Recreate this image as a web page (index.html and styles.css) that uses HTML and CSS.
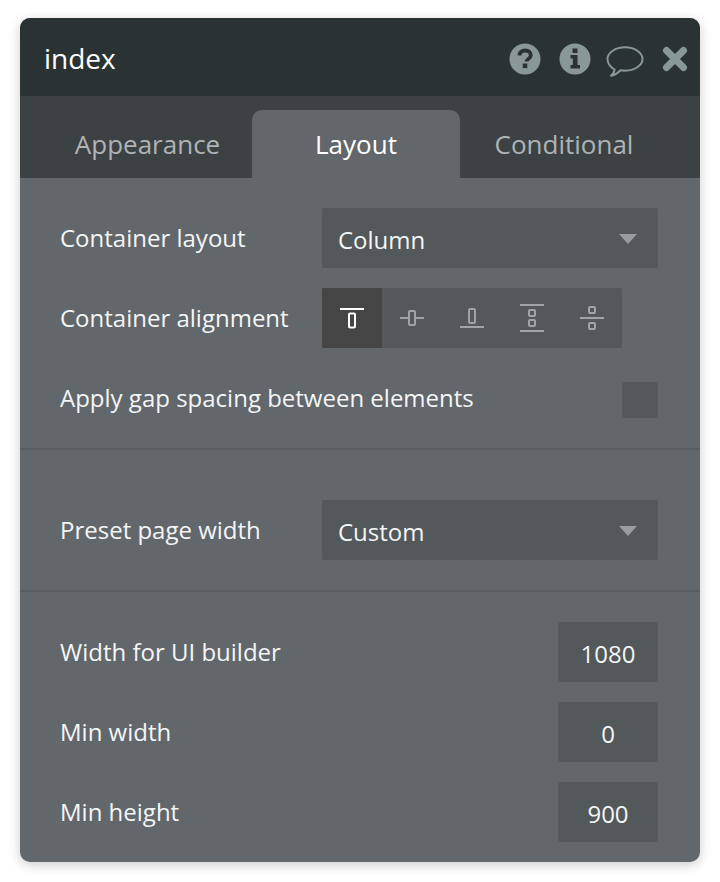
FILE: index.html
```html
<!DOCTYPE html>
<html lang="en">
<head>
    <meta charset="UTF-8">
    <title>index</title>
    <link rel="stylesheet" href="styles.css">
</head>
<body>
<div class="panel">
    <div class="head">
        <span class="title">index</span>
        <div class="head-icons">
            <svg class="ico" width="32" height="32" viewBox="0 0 32 32">
                <circle cx="16" cy="16" r="15.5" fill="#8a9799"/>
                <path d="M10.5 12.5c0-3.2 2.500-5 5.700-5 3.200 0 5.600 1.900 5.600 4.700 0 3.800-4.300 3.600-4.300 6.300" fill="none" stroke="#2b3234" stroke-width="3.800"/>
                <rect x="13.700" y="20.500" width="4.600" height="4.600" fill="#2b3234"/>
            </svg>
            <svg class="ico" width="32" height="32" viewBox="0 0 32 32">
                <circle cx="16" cy="16" r="15.500" fill="#8a9799"/>
                <rect x="13.500" y="5.500" width="5" height="4.500" fill="#2b3234"/>
                <path d="M11.500 12h7v10h2.500v3.500H11.500V22h2.300v-6.500h-2.300z" fill="#2b3234"/>
            </svg>
            <svg class="ico chat" width="38" height="36" viewBox="0 0 38 36">
                <path d="M4.500 35c2-1 3.500-3 4-6.500C4.500 26 1.500 22.500 1.500 18 1.500 11.500 9.500 6.300 19 6.300s17.500 5.200 17.500 11.700-8 11.700-17.500 11.700c-1.500 0-3-.1-4.500-.4-2.500 2.500-6 5.200-10 5.700z" fill="none" stroke="#8a9799" stroke-width="2"/>
            </svg>
            <svg class="ico" width="26" height="26" viewBox="0 0 26 26">
                <path d="M4.500 4.500l17 17M21.500 4.500l-17 17" fill="none" stroke="#8a9799" stroke-width="7" stroke-linecap="round"/>
            </svg>
        </div>
    </div>
    <div class="tabs">
        <div class="tab">Appearance</div>
        <div class="tab active">Layout</div>
        <div class="tab">Conditional</div>
    </div>
    <div class="section first">
        <div class="row">
            <span class="label">Container layout</span>
            <div class="select">Column<i class="caret"></i></div>
        </div>
        <div class="row">
            <span class="label">Container alignment</span>
            <div class="aligns">
                <div class="align current">
                    <svg viewBox="0 0 60 60" width="60" height="60"><path d="M18 21h24"/><rect x="27" y="25.500" width="6" height="14" rx="1"/></svg>
                </div>
                <div class="align">
                    <svg viewBox="0 0 60 60" width="60" height="60"><path d="M18 30h9M33 30h9"/><rect x="27" y="23" width="6" height="14" rx="1"/></svg>
                </div>
                <div class="align">
                    <svg viewBox="0 0 60 60" width="60" height="60"><path d="M18 39h24"/><rect x="27" y="21" width="6" height="14" rx="1"/></svg>
                </div>
                <div class="align">
                    <svg viewBox="0 0 60 60" width="60" height="60"><path d="M18 17h24M18 43h24"/><rect x="27" y="22" width="6" height="6" rx="1"/><rect x="27" y="32" width="6" height="6" rx="1"/></svg>
                </div>
                <div class="align">
                    <svg viewBox="0 0 60 60" width="60" height="60"><path d="M18 30h24"/><rect x="27" y="19" width="6" height="6" rx="1"/><rect x="27" y="35" width="6" height="6" rx="1"/></svg>
                </div>
            </div>
        </div>
        <div class="row">
            <span class="label">Apply gap spacing between elements</span>
            <div class="check"></div>
        </div>
    </div>
    <div class="section second">
        <div class="row">
            <span class="label">Preset page width</span>
            <div class="select">Custom<i class="caret"></i></div>
        </div>
    </div>
    <div class="section third">
        <div class="row">
            <span class="label">Width for UI builder</span>
            <div class="num">1080</div>
        </div>
        <div class="row">
            <span class="label">Min width</span>
            <div class="num">0</div>
        </div>
        <div class="row">
            <span class="label">Min height</span>
            <div class="num">900</div>
        </div>
    </div>
</div>
</body>
</html>
```

FILE: styles.css
```css
*{
    padding: 0;
    margin: 0;
    box-sizing: border-box;
}
body{
    background-color: #fff;
    padding: 18px 20px;
    font-family: "Open Sans", sans-serif;
}
.panel{
    width: 680px;
    height: 844px;
    border-radius: 10px;
    overflow: hidden;
    background-color: #62676b;
    box-shadow: 0 3px 12px rgba(0,0,0,.2);
}
.head{
    height: 78px;
    padding: 2px 12px 0 24px;
    background-color: #2b3234;
    display: flex;
    align-items: center;
    justify-content: space-between;
}
.title{
    font-size: 28px;
    color: #fff;
}
.head-icons{
    padding-top: 2px;
    display: flex;
    align-items: center;
    gap: 18px;
}
.ico{
    display: block;
}
.ico.chat{
    margin-left: -3px;
}
.tabs{
    height: 82px;
    padding-top: 14px;
    background-color: #3c4144;
    display: flex;
}
.tab{
    width: 208px;
    font-size: 26px;
    line-height: 68px;
    text-align: center;
    color: #b0b3b5;
    border-radius: 10px 10px 0 0;
}
.tab:first-child{
    width: 232px;
    padding-left: 23px;
}
.tab.active{
    background-color: #62676b;
    color: #fff;
}
.section{
    display: flex;
    flex-direction: column;
    gap: 20px;
    padding: 30px 42px 0 40px;
    border-bottom: 2px solid #585d60;
}
.section.first{
    height: 272px;
}
.section.second{
    height: 142px;
    padding-top: 50px;
}
.section.third{
    border-bottom: 0;
}
.row{
    height: 60px;
    display: flex;
    align-items: center;
    justify-content: space-between;
}
.label{
    font-size: 24px;
    color: #f4f5f5;
    position: relative;
    top: -1px;
}
.select{
    width: 336px;
    height: 60px;
    padding: 2px 16px 0;
    border-radius: 2px;
    background-color: #53585a;
    display: flex;
    align-items: center;
    justify-content: space-between;
    font-size: 24px;
    color: #f4f5f5;
}
.caret{
    width: 0;
    height: 0;
    margin-right: 5px;
    border-left: 9px solid transparent;
    border-right: 9px solid transparent;
    border-top: 10px solid #999da0;
}
.aligns{
    width: 300px;
    margin-right: 36px;
    display: flex;
    background-color: #53585a;
    border-radius: 2px;
    overflow: hidden;
}
.align{
    width: 60px;
    height: 60px;
}
.align svg{
    display: block;
    fill: none;
    stroke: #a0a4a6;
    stroke-width: 2;
}
.align.current{
    background-color: #454545;
}
.align.current svg{
    stroke: #fff;
}
.check{
    width: 36px;
    height: 36px;
    margin-top: 3px;
    background-color: #53585a;
    border-radius: 2px;
}
.num{
    width: 100px;
    height: 60px;
    border-radius: 2px;
    background-color: #53585a;
    font-size: 24px;
    line-height: 64px;
    text-align: center;
    color: #f4f5f5;
}
```
